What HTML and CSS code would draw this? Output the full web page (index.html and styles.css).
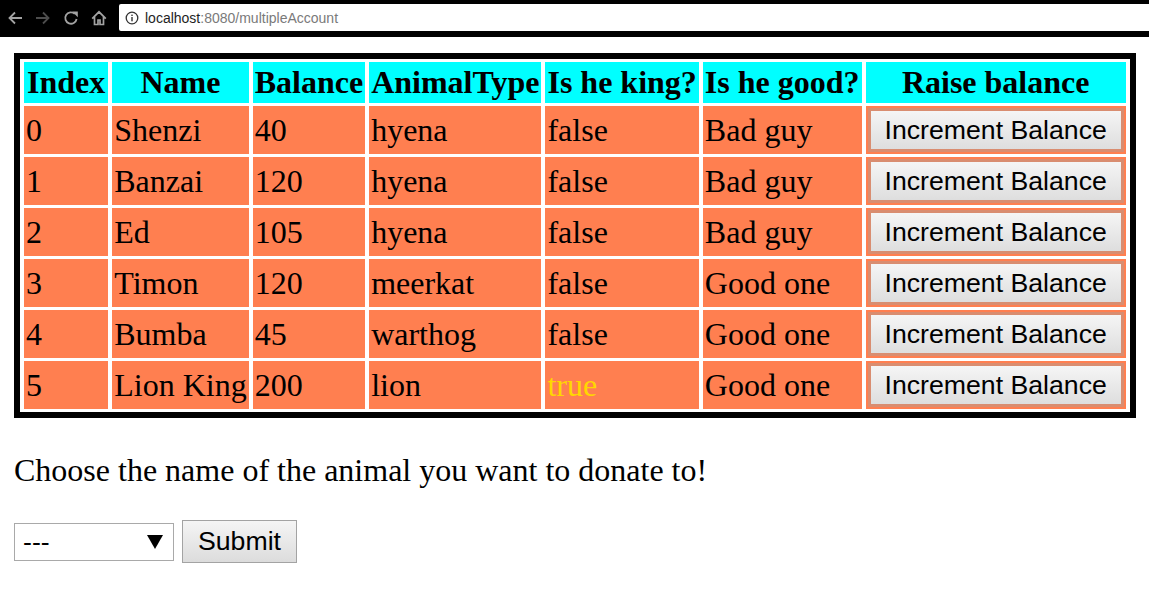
FILE: index.html
```html
<!DOCTYPE html>
<html>
<head>
<meta charset="utf-8">
<title>multipleAccount</title>
<link rel="stylesheet" href="styles.css">
</head>
<body>
<header class="chrome">
  <nav class="nav">
    <svg class="navicon back" viewBox="0 0 16 16" width="16" height="16"><path d="M15 8H2.5M8 2.5L2.5 8l5.5 5.5" fill="none" stroke="currentColor" stroke-width="1.8"/></svg>
    <svg class="navicon fwd" viewBox="0 0 16 16" width="16" height="16"><path d="M1 8h12.5M8 2.5l5.5 5.5-5.5 5.5" fill="none" stroke="currentColor" stroke-width="1.8"/></svg>
    <svg class="navicon reload" viewBox="0 0 16 16" width="16" height="16"><path d="M13.6 9A5.7 5.7 0 1 1 11.8 3.8" fill="none" stroke="currentColor" stroke-width="1.8"/><path d="M9.2 1.6h5.6v5.6z" fill="currentColor"/></svg>
    <svg class="navicon home" viewBox="0 0 16 16" width="16" height="16"><path d="M1.2 8.6L8 1.8l6.8 6.8M3.5 6.5v8h3.5v-4.5h2v4.5h3.5v-8" fill="none" stroke="currentColor" stroke-width="1.7" stroke-linejoin="miter"/></svg>
  </nav>
  <div class="omnibox">
    <svg class="info" viewBox="0 0 14 14" width="14" height="14"><circle cx="7" cy="7" r="5.8" fill="none" stroke="#333" stroke-width="1.3"/><rect x="6.3" y="6" width="1.4" height="4.3" fill="#333"/><rect x="6.3" y="3.6" width="1.4" height="1.4" fill="#333"/></svg>
    <span class="url"><span class="host">localhost</span>:8080/multipleAccount</span>
  </div>
</header>

<main class="page">
  <table class="accounts">
    <thead>
      <tr><th class="idx">Index</th><th>Name</th><th>Balance</th><th>AnimalType</th><th>Is he king?</th><th>Is he good?</th><th>Raise balance</th></tr>
    </thead>
    <tbody>
      <tr><td>0</td><td>Shenzi</td><td>40</td><td>hyena</td><td>false</td><td>Bad guy</td><td><button class="inc">Increment Balance</button></td></tr>
      <tr><td>1</td><td>Banzai</td><td>120</td><td>hyena</td><td>false</td><td>Bad guy</td><td><button class="inc">Increment Balance</button></td></tr>
      <tr><td>2</td><td>Ed</td><td>105</td><td>hyena</td><td>false</td><td>Bad guy</td><td><button class="inc">Increment Balance</button></td></tr>
      <tr><td>3</td><td>Timon</td><td>120</td><td>meerkat</td><td>false</td><td>Good one</td><td><button class="inc">Increment Balance</button></td></tr>
      <tr><td>4</td><td>Bumba</td><td>45</td><td>warthog</td><td>false</td><td>Good one</td><td><button class="inc">Increment Balance</button></td></tr>
      <tr><td>5</td><td>Lion King</td><td>200</td><td>lion</td><td class="king">true</td><td>Good one</td><td><button class="inc">Increment Balance</button></td></tr>
    </tbody>
  </table>

  <p class="prompt">Choose the name of the animal you want to donate to!</p>

  <form class="donate">
    <div class="select-wrap">
      <select class="animal">
        <option>---</option>
        <option>Shenzi</option>
        <option>Banzai</option>
        <option>Ed</option>
        <option>Timon</option>
        <option>Bumba</option>
        <option>Lion King</option>
      </select>
    </div>
    <button type="button" class="submit">Submit</button>
  </form>
</main>
</body>
</html>
```

FILE: styles.css
```css
html, body {
  margin: 0;
  padding: 0;
  background: #fff;
}

body {
  font-family: "Liberation Serif", "Times New Roman", serif;
  color: #000;
}

/* browser chrome */
.chrome {
  display: flex;
  align-items: stretch;
  height: 37px;
  box-sizing: border-box;
  padding: 4px 0 6px 0;
  background: #000;
}

.nav {
  display: flex;
  align-items: center;
  gap: 12px;
  padding-left: 7px;
  width: 112px;
}

.navicon {
  display: block;
  flex: none;
}

.back { color: #a3a3a3; }
.fwd { color: #4d4d4d; }
.reload { color: #a3a3a3; }
.home { color: #a3a3a3; }

.omnibox {
  flex: 1;
  display: flex;
  align-items: center;
  gap: 6px;
  background: #fff;
  border-radius: 2px 0 0 2px;
  padding-left: 6px;
  font-family: "Liberation Sans", Arial, sans-serif;
  font-size: 14px;
}

.info { display: block; }

.url {
  color: #7a7a7a;
}

.host {
  color: #1e1e1e;
}

/* page */
.page {
  padding: 16px 14px;
}

.accounts {
  border: 6px solid #000;
  border-spacing: 4px 3px;
  font-size: 32px;
  line-height: 37px;
  white-space: nowrap;
}

.accounts th {
  background: #00ffff;
  padding: 2px;
  font-weight: bold;
  text-align: center;
}

.accounts th.idx {
  padding: 2px 3px;
}

.accounts td {
  background: #ff7f50;
  padding: 2px;
  text-align: left;
  vertical-align: middle;
}

.accounts td.king {
  color: #ffd700;
}

.inc {
  display: block;
  height: 44px;
  padding: 0 14px;
  margin: 0;
  border: 3px solid #d98d70;
  background: linear-gradient(#f5f5f5, #dedede);
  font-family: "Liberation Sans", Arial, sans-serif;
  font-size: 26.67px;
  color: #000;
  white-space: nowrap;
}

.prompt {
  margin: 34px 0 0 0;
  font-size: 32px;
  line-height: 37px;
}

.donate {
  display: flex;
  align-items: center;
  gap: 8px;
  margin-top: 31px;
}

.select-wrap {
  position: relative;
  width: 160px;
  height: 38px;
}

.animal {
  appearance: none;
  -webkit-appearance: none;
  width: 160px;
  height: 38px;
  box-sizing: border-box;
  border: 1px solid #a9a9a9;
  border-radius: 0;
  background: #fff;
  padding: 0 0 0 8px;
  font-family: "Liberation Sans", Arial, sans-serif;
  font-size: 26.67px;
  color: #000;
}

.select-wrap::after {
  content: "";
  position: absolute;
  right: 11px;
  top: 12px;
  width: 0;
  height: 0;
  border-left: 8px solid transparent;
  border-right: 8px solid transparent;
  border-top: 14px solid #000;
  pointer-events: none;
}

.submit {
  height: 43px;
  width: 115px;
  padding: 0;
  border: 1px solid #a3a3a3;
  border-radius: 0;
  background: linear-gradient(#f5f5f5, #dcdcdc);
  font-family: "Liberation Sans", Arial, sans-serif;
  font-size: 26.67px;
  color: #000;
}
```
